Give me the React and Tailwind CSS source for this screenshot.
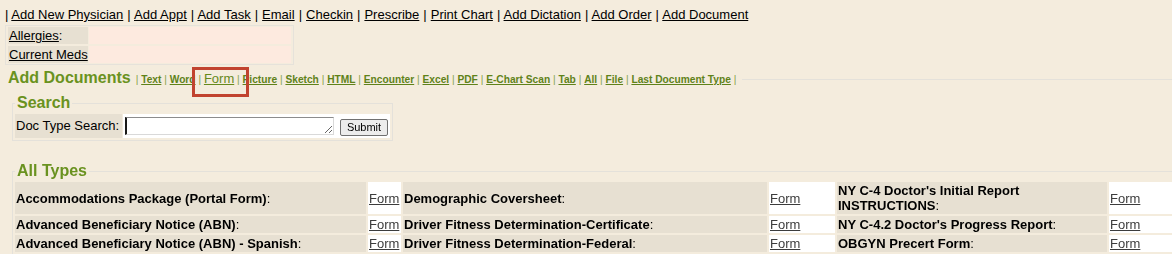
import React from 'react';

const navItems = ['Add New Physician', 'Add Appt', 'Add Task', 'Email', 'Checkin', 'Prescribe', 'Print Chart', 'Add Dictation', 'Add Order', 'Add Document'];

const docLinks = ['Text', 'Word', 'Form', 'Picture', 'Sketch', 'HTML', 'Encounter', 'Excel', 'PDF', 'E-Chart Scan', 'Tab', 'All', 'File', 'Last Document Type'];

const formRows = [
  ['Accommodations Package (Portal Form)', 'Demographic Coversheet', "NY C-4 Doctor's Initial Report INSTRUCTIONS"],
  ['Advanced Beneficiary Notice (ABN)', 'Driver Fitness Determination-Certificate', "NY C-4.2 Doctor's Progress Report"],
  ['Advanced Beneficiary Notice (ABN) - Spanish', 'Driver Fitness Determination-Federal', 'OBGYN Precert Form'],
  ['Authorization to Release Information', 'Emergency Contact Form', 'Patient Intake Form'],
];

function LabelCell({ name }) {
  return (
    <div className="flex items-center bg-[#e7e0d2] px-[1px] py-[1px] leading-[15px]">
      <span>
        <span className="font-bold">{name}</span>:
      </span>
    </div>
  );
}

function FormCell() {
  return (
    <div className="flex items-center bg-white px-[1px] py-[1px] leading-[15px]">
      <a href="#" className="text-[#3c3c3c] underline">Form</a>
    </div>
  );
}

export default function App() {
  return (
    <div className="relative w-[1172px] h-[254px] overflow-hidden bg-[#f4ecdd] text-[13px] text-black font-['Liberation_Sans',Arial,sans-serif]">
      {/* top action bar */}
      <div className="h-[25px] pt-[7px] pl-[5px] leading-[15px] whitespace-nowrap">
        |
        {navItems.map((item, i) => (
          <React.Fragment key={item}>
            {' '}
            <a href="#" className="underline">{item}</a>
            {i < navItems.length - 1 ? <span className="mx-[0.4px]"> |</span> : ''}
          </React.Fragment>
        ))}
      </div>

      {/* allergies / meds */}
      <div className="ml-[5px] w-[289px] border border-[#e6e2da] px-[2px] py-[1px] flex flex-col gap-[2px]">
        <div className="flex gap-[1px] leading-[15px]">
          <div className="w-[80px] bg-[#e7e0d2] py-[1px] pl-[1px]">
            <a href="#" className="underline">Allergies</a>:
          </div>
          <div className="flex-1 bg-[#fdeadf]" />
        </div>
        <div className="flex gap-[1px] leading-[15px]">
          <div className="w-[80px] bg-[#e7e0d2] py-[1px] pl-[1px] whitespace-nowrap">
            <a href="#" className="underline">Current Meds</a>
          </div>
          <div className="flex-1 bg-[#fdeadf]" />
        </div>
      </div>

      {/* add documents */}
      <fieldset className="mt-[4px] ml-[8px] border-t border-[#e4e1da]">
        <legend className="pr-[6px] whitespace-nowrap leading-[18px]">
          <span className="text-[16px] font-bold text-[#6a9220]">Add Documents</span>
          <span className="ml-[5px] text-[10.2px] text-[#86a24a]">
            |
            {docLinks.map((link) => (
              <React.Fragment key={link}>
                {' '}
                {link === 'Form' ? (
                  <a href="#" className="text-[13px] font-normal text-[#66891c] underline">Form</a>
                ) : (
                  <a href="#" className="font-bold text-[#5f8219] underline">{link}</a>
                )}
                {' |'}
              </React.Fragment>
            ))}
          </span>
        </legend>

        <fieldset className="mt-[5px] ml-[4px] w-[381px] border border-[#e4e1da] px-[2px] pt-[2px] pb-[2px]">
          <legend className="px-[2px] text-[16px] font-bold leading-[18px] text-[#6a9220]">Search</legend>
          <div className="flex h-[24px] gap-[1px]">
            <div className="flex w-[107px] items-center bg-[#e7e0d2] pl-[1px] whitespace-nowrap">Doc Type Search:</div>
            <div className="flex flex-1 items-center bg-white px-[2px]">
              <textarea
                rows={1}
                className="h-[18px] w-[209px] border border-t-[#8c8c8c] border-l-2 border-l-[#1a1a1a] border-r-[#d9d9d9] border-b-[#d9d9d9] bg-white p-0 outline-none"
              />
              <button className="ml-[6px] mt-[2px] h-[17px] w-[48px] rounded-[2px] border border-[#707070] bg-[#ececec] text-[11px] leading-[15px] text-black">
                Submit
              </button>
            </div>
          </div>
        </fieldset>

        <fieldset className="mt-[21px] ml-[4px] border border-[#e4e1da] px-[2px] pt-[2px]">
          <legend className="px-[2px] text-[16px] font-bold leading-[18px] text-[#6a9220]">All Types</legend>
          <div className="grid grid-cols-[351px_33px_364px_66px_270px_80px] gap-[2px]">
            {formRows.map((row) => (
              <React.Fragment key={row[0]}>
                <LabelCell name={row[0]} />
                <FormCell />
                <LabelCell name={row[1]} />
                <FormCell />
                <LabelCell name={row[2]} />
                <FormCell />
              </React.Fragment>
            ))}
          </div>
        </fieldset>
      </fieldset>

      {/* highlight annotation */}
      <div className="absolute left-[192px] top-[67px] h-[30px] w-[57px] border-[3px] border-[#c1432f]" />
    </div>
  );
}
